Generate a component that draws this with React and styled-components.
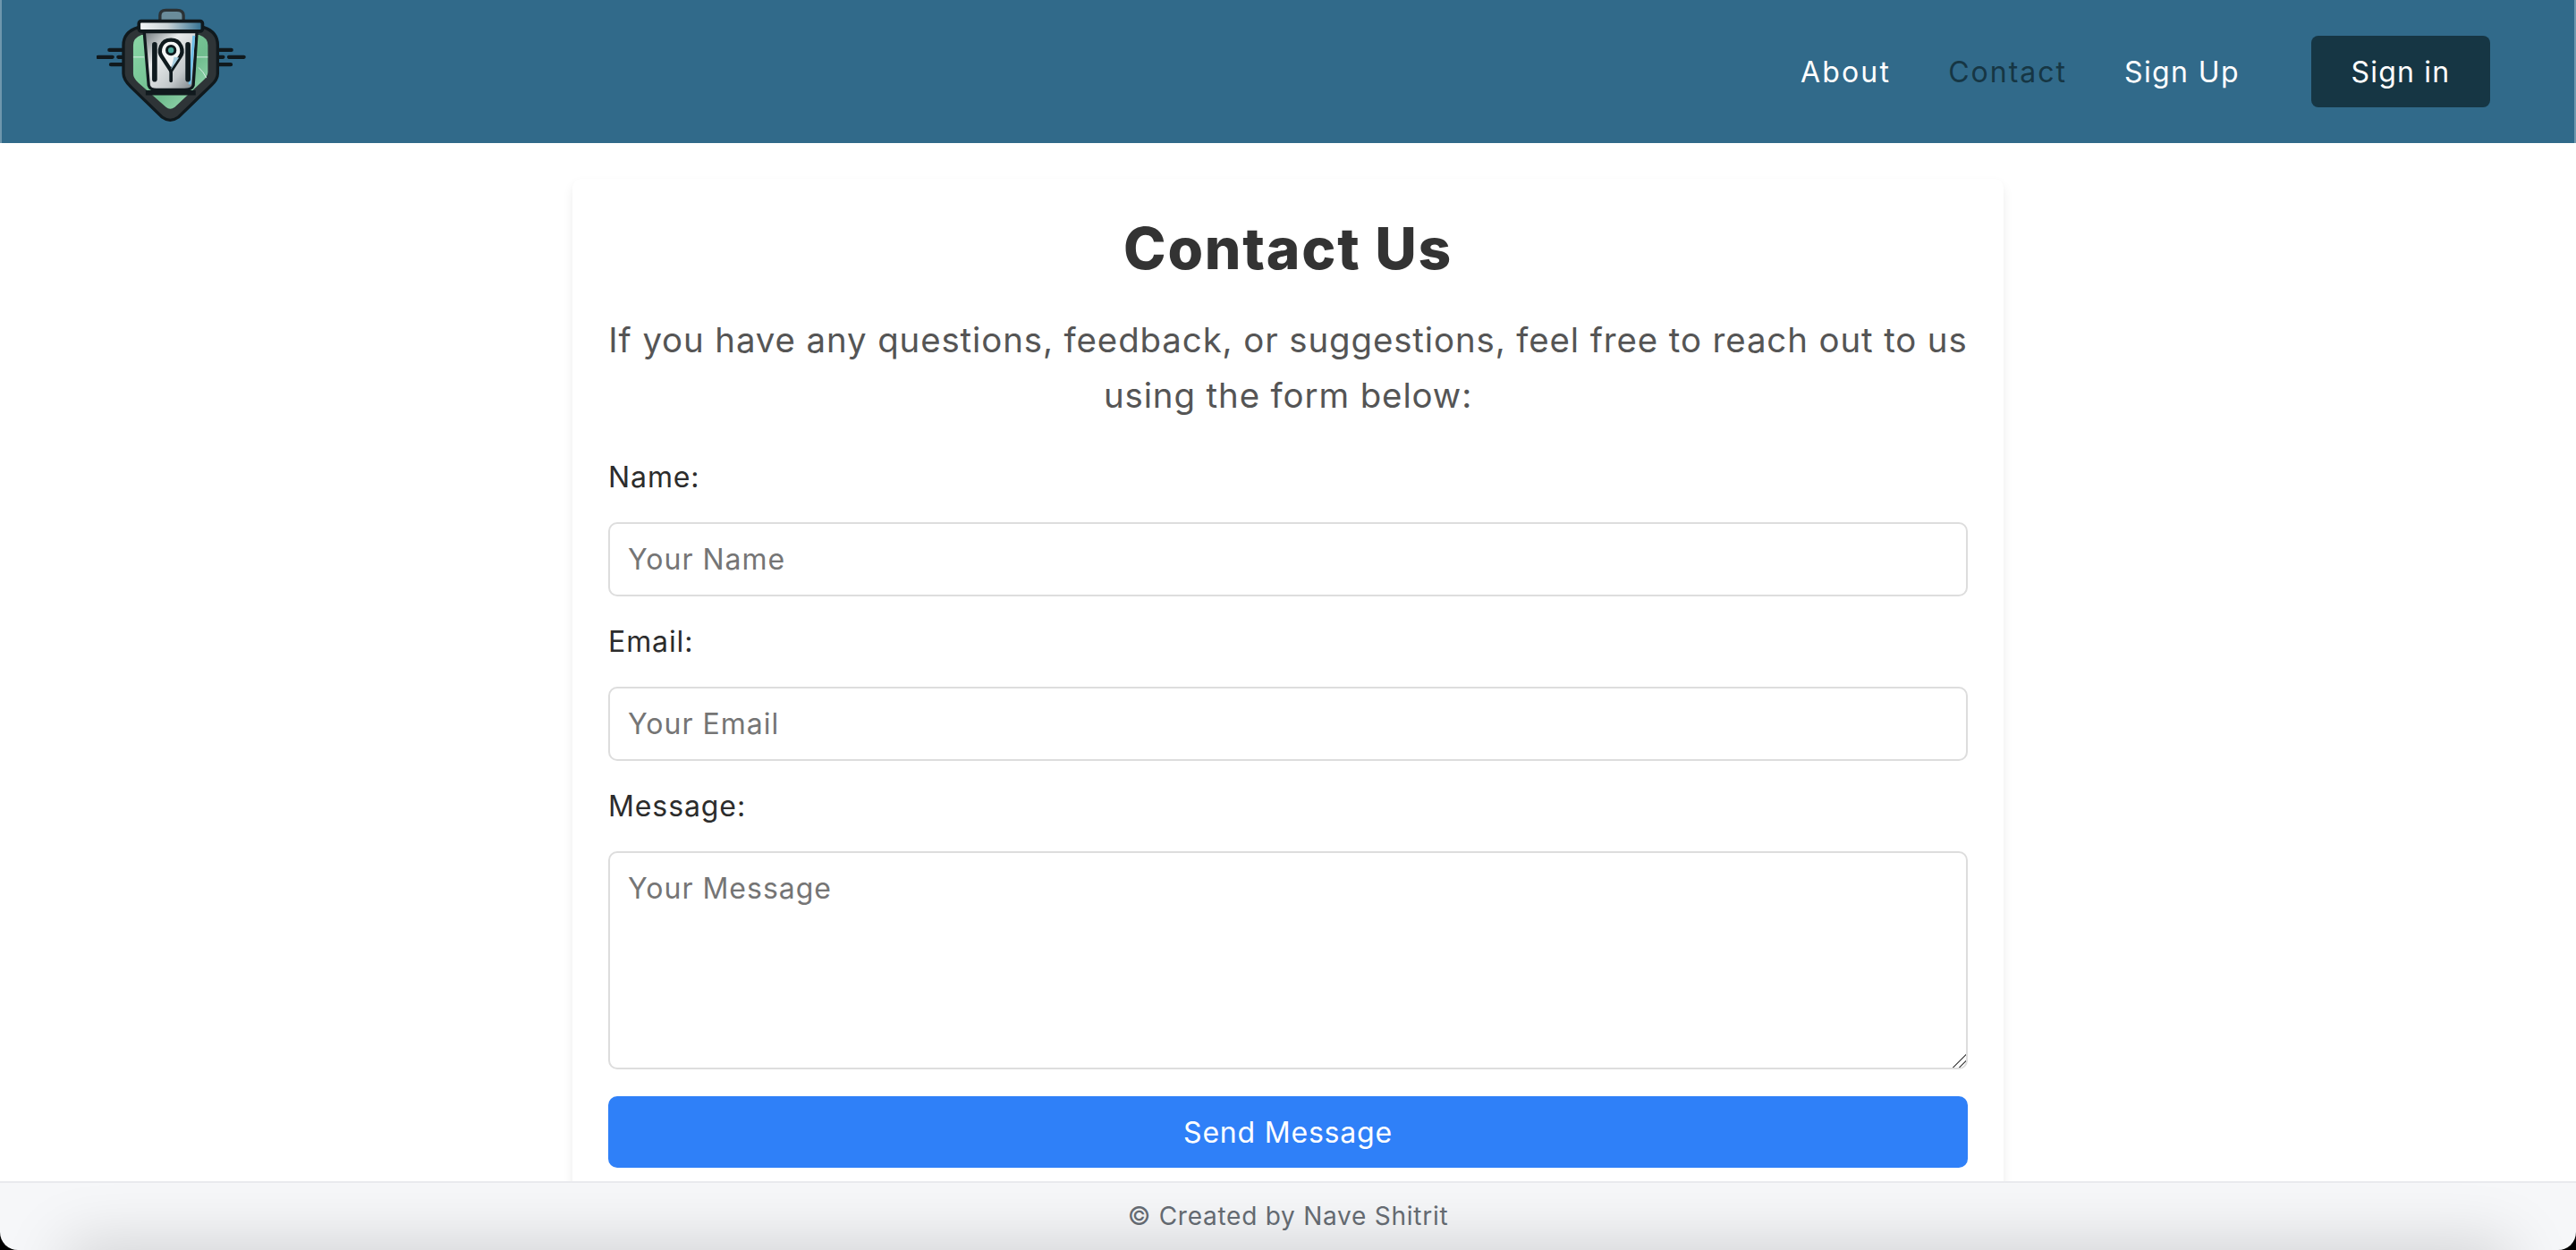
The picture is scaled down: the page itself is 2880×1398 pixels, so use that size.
import React from "react";
import styled, { createGlobalStyle } from "styled-components";

const GlobalStyle = createGlobalStyle`
  html, body {
    margin: 0;
    height: 100%;
    background: #000;
  }
  * {
    box-sizing: border-box;
  }
`;

const Page = styled.div`
  display: flex;
  flex-direction: column;
  height: 1398px;
  overflow: hidden;
  font-family: Inter, "Liberation Sans", sans-serif;
  background: #000;
`;

const Header = styled.header`
  display: flex;
  flex: none;
  align-items: center;
  justify-content: space-between;
  height: 160px;
  padding: 0 96px 0 108px;
  background: #316a8a;
  box-shadow: inset 2px 0 rgba(255, 255, 255, 0.3), inset -2px 0 rgba(255, 255, 255, 0.3);
`;

const LogoMark = styled.svg`
  width: 168px;
  height: 128px;
  margin-bottom: 14px;
`;

const Nav = styled.nav`
  display: flex;
  align-items: center;
`;

const NavLink = styled.a`
  margin-right: ${(p) => p.$gap}px;
  font-size: 32px;
  letter-spacing: ${(p) => p.$spacing}px;
  color: ${(p) => (p.$active ? "#163644" : "#fff")};
`;

const SignIn = styled.button`
  width: 200px;
  height: 80px;
  border: 0;
  border-radius: 8px;
  font: inherit;
  font-size: 32px;
  letter-spacing: 1.2px;
  color: #fff;
  background: #163644;
`;

const Main = styled.main`
  flex: 1;
  min-height: 0;
  padding-top: 40px;
  background: #fff;
`;

const Card = styled.section`
  width: 1600px;
  height: 1300px;
  margin: 0 auto;
  padding: 40px 40px 0;
  border-radius: 10px;
  background: #fff;
  box-shadow: 0 6px 12px rgba(0, 0, 0, 0.08);
`;

const Title = styled.h1`
  margin: 0;
  font-size: 64px;
  line-height: 76px;
  font-weight: 800;
  letter-spacing: 1.8px;
  text-align: center;
  color: #333;
`;

const Intro = styled.p`
  margin: 33px 0 0;
  font-size: 38.4px;
  line-height: 62px;
  letter-spacing: 0.9px;
  text-align: center;
  color: #555;
`;

const Form = styled.form`
  display: flex;
  flex-direction: column;
  margin-top: 10px;
`;

const Label = styled.label`
  height: 61px;
  margin: 20px 0;
  font-size: 32px;
  line-height: 61px;
  letter-spacing: 0.9px;
  color: #2c2c2c;
`;

const fieldStyles = `
  display: block;
  width: 100%;
  padding: 20px;
  border: 2px solid #ddd;
  border-radius: 10px;
  font-family: Inter, "Liberation Sans", sans-serif;
  font-size: 32px;
  letter-spacing: 1px;
  background: #fff;
  &::placeholder {
    color: #757575;
  }
`;

const Input = styled.input`
  ${fieldStyles}
  height: 83px;
`;

const TextArea = styled.textarea`
  ${fieldStyles}
  height: 244px;
  &::-webkit-resizer {
    background: linear-gradient(
      135deg,
      transparent 47%,
      #666 47%,
      #666 54%,
      transparent 54%,
      transparent 72%,
      #666 72%,
      #666 79%,
      transparent 79%
    );
  }
`;

const Submit = styled.button`
  height: 80px;
  margin-top: 30px;
  border: 0;
  border-radius: 10px;
  font-family: inherit;
  font-size: 32px;
  letter-spacing: 0.8px;
  color: #fff;
  background: #2f80f8;
`;

const Footer = styled.footer`
  position: relative;
  flex: none;
  height: 77px;
  overflow: hidden;
  border-top: 2px solid #e9eaee;
  border-radius: 0 0 20px 20px;
  font-size: 28px;
  line-height: 75px;
  letter-spacing: 0.75px;
  text-align: center;
  color: #676d74;
  background: #f6f7f9;
  &::after {
    content: "";
    position: absolute;
    left: 80px;
    right: 80px;
    bottom: -50px;
    height: 50px;
    box-shadow: 0 0 70px 6px rgba(0, 0, 0, 0.17);
  }
`;

// coordinates are 3x the logo's pixel size
const Logo = () => (
  <LogoMark viewBox="145 25 505 385" fill="none">
    <defs>
      <linearGradient id="can" x1="0" x2="1" y1="0" y2="1">
        <stop offset="0" stopColor="#70787c" />
        <stop offset="0.35" stopColor="#e9ecec" />
        <stop offset="0.7" stopColor="#c3c9cb" />
        <stop offset="1" stopColor="#6e777b" />
      </linearGradient>
      <linearGradient id="lid" x1="0" x2="1">
        <stop offset="0" stopColor="#f6f8f8" />
        <stop offset="0.45" stopColor="#c9d3d7" />
        <stop offset="1" stopColor="#2f6f90" />
      </linearGradient>
      <linearGradient id="field" x1="0" x2="1" y1="0" y2="1">
        <stop offset="0" stopColor="#8ad6a6" />
        <stop offset="0.6" stopColor="#6fbc8e" />
        <stop offset="1" stopColor="#a5e0bb" />
      </linearGradient>
    </defs>
    <path
      d="M188 166H232M150 190H198M218 190H235M193 215H232M555 166H598M555 190H570M590 190H640M555 215H596"
      stroke="#10191d"
      strokeWidth="13"
      strokeLinecap="round"
    />
    <path
      d="M285 90Q235 105 235 150V245Q235 265 260 290L365 392Q392 412 420 392L530 285Q552 265 552 245V150Q552 105 505 90Z"
      fill="#2e3437"
      stroke="#10191d"
      strokeWidth="10"
    />
    <path
      d="M296 115Q268 125 268 150V245Q268 260 285 276L378 358Q392 370 408 358L500 272Q519 256 519 240V150Q519 125 490 115Z"
      fill="url(#field)"
    />
    <path d="M268 190H305M480 190H519M488 225Q505 240 514 260" stroke="#d6ece2" strokeWidth="3" />
    <path d="M310 310H478" stroke="#10191d" strokeWidth="16" />
    <path
      d="M305 105H482L470 285Q465 300 440 300H345Q325 300 320 285Z"
      fill="url(#can)"
      stroke="#10191d"
      strokeWidth="10"
    />
    <path d="M472 118L458 282" stroke="#6fc0e8" strokeWidth="9" />
    <path
      d="M358 64V50Q358 32 378 32H415Q437 32 437 50V64"
      fill="#6a8c9a"
      stroke="#2b3235"
      strokeWidth="10"
    />
    <rect x="287" y="69" width="214" height="34" rx="8" fill="url(#lid)" stroke="#10191d" strokeWidth="11" />
    <path d="M340 148V265M452 148V265" stroke="#0f1a1e" strokeWidth="17" strokeLinecap="round" />
    <path d="M395 240V270" stroke="#0f1a1e" strokeWidth="11" strokeLinecap="round" />
    <path
      d="M395 132C360 132 350 170 365 190L395 236L425 190C440 170 430 132 395 132Z"
      fill="#f4f6f6"
      stroke="#0f1a1e"
      strokeWidth="13"
    />
    <path d="M422 192L395 232L405 190Z" fill="#a9cfe0" />
    <circle cx="395" cy="167" r="14" fill="#4fa89c" stroke="#0f1a1e" strokeWidth="9" />
  </LogoMark>
);

const App = () => (
  <Page>
    <GlobalStyle />
    <Header>
      <Logo />
      <Nav>
        <NavLink $gap={64} $spacing={2.2}>About</NavLink>
        <NavLink $active $gap={64} $spacing={2}>Contact</NavLink>
        <NavLink $gap={80} $spacing={1.4}>Sign Up</NavLink>
        <SignIn>Sign in</SignIn>
      </Nav>
    </Header>
    <Main>
      <Card>
        <Title>Contact Us</Title>
        <Intro>
          If you have any questions, feedback, or suggestions, feel free to reach out to us using the form below:
        </Intro>
        <Form>
          <Label>Name:</Label>
          <Input placeholder="Your Name" />
          <Label>Email:</Label>
          <Input placeholder="Your Email" />
          <Label>Message:</Label>
          <TextArea placeholder="Your Message" />
          <Submit type="button">Send Message</Submit>
        </Form>
      </Card>
    </Main>
    <Footer>© Created by Nave Shitrit</Footer>
  </Page>
);

export default App;
